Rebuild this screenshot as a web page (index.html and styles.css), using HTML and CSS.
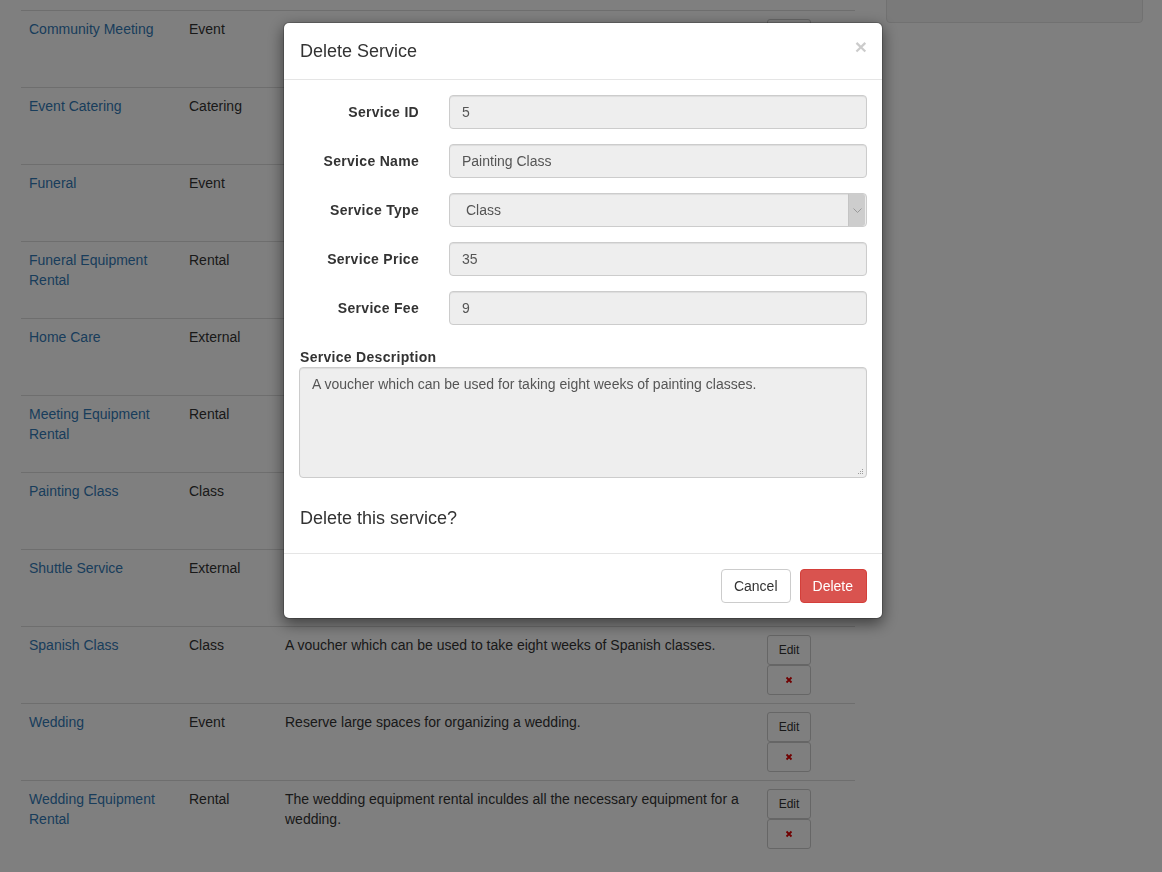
FILE: index.html
```html
<!DOCTYPE html>
<html lang="en">
<head>
<meta charset="utf-8">
<title>Services</title>
<link rel="stylesheet" href="styles.css">
</head>
<body>
<div class="page">
  <main class="main">
    <table class="services">
      <colgroup><col class="c-name"><col class="c-type"><col class="c-desc"><col class="c-act"></colgroup>
      <tbody>
        <tr class="row-partial">
          <td></td><td></td><td></td>
          <td><div class="acts acts-tail"><button class="btn btn-sm" aria-label="Delete"><svg class="x" viewBox="0 0 8 8"><path d="M1.5 1.5L6.5 6.5M6.5 1.5L1.5 6.5"/></svg></button></div></td>
        </tr>
        <tr>
          <td><a href="#">Community Meeting</a></td><td>Event</td>
          <td>Reserve a room for a community meeting.</td>
          <td><div class="acts"><button class="btn btn-sm">Edit</button><button class="btn btn-sm" aria-label="Delete"><svg class="x" viewBox="0 0 8 8"><path d="M1.5 1.5L6.5 6.5M6.5 1.5L1.5 6.5"/></svg></button></div></td>
        </tr>
        <tr>
          <td><a href="#">Event Catering</a></td><td>Catering</td>
          <td>Catering service for events.</td>
          <td><div class="acts"><button class="btn btn-sm">Edit</button><button class="btn btn-sm" aria-label="Delete"><svg class="x" viewBox="0 0 8 8"><path d="M1.5 1.5L6.5 6.5M6.5 1.5L1.5 6.5"/></svg></button></div></td>
        </tr>
        <tr>
          <td><a href="#">Funeral</a></td><td>Event</td>
          <td>Reserve a room for a funeral service.</td>
          <td><div class="acts"><button class="btn btn-sm">Edit</button><button class="btn btn-sm" aria-label="Delete"><svg class="x" viewBox="0 0 8 8"><path d="M1.5 1.5L6.5 6.5M6.5 1.5L1.5 6.5"/></svg></button></div></td>
        </tr>
        <tr>
          <td><a href="#">Funeral Equipment Rental</a></td><td>Rental</td>
          <td>Rental of the equipment needed for a funeral.</td>
          <td><div class="acts"><button class="btn btn-sm">Edit</button><button class="btn btn-sm" aria-label="Delete"><svg class="x" viewBox="0 0 8 8"><path d="M1.5 1.5L6.5 6.5M6.5 1.5L1.5 6.5"/></svg></button></div></td>
        </tr>
        <tr>
          <td><a href="#">Home Care</a></td><td>External</td>
          <td>Home care provided by an external partner.</td>
          <td><div class="acts"><button class="btn btn-sm">Edit</button><button class="btn btn-sm" aria-label="Delete"><svg class="x" viewBox="0 0 8 8"><path d="M1.5 1.5L6.5 6.5M6.5 1.5L1.5 6.5"/></svg></button></div></td>
        </tr>
        <tr>
          <td><a href="#">Meeting Equipment Rental</a></td><td>Rental</td>
          <td>Rental of projectors, screens and chairs for meetings.</td>
          <td><div class="acts"><button class="btn btn-sm">Edit</button><button class="btn btn-sm" aria-label="Delete"><svg class="x" viewBox="0 0 8 8"><path d="M1.5 1.5L6.5 6.5M6.5 1.5L1.5 6.5"/></svg></button></div></td>
        </tr>
        <tr>
          <td><a href="#">Painting Class</a></td><td>Class</td>
          <td>A voucher which can be used for taking eight weeks of painting classes.</td>
          <td><div class="acts"><button class="btn btn-sm">Edit</button><button class="btn btn-sm" aria-label="Delete"><svg class="x" viewBox="0 0 8 8"><path d="M1.5 1.5L6.5 6.5M6.5 1.5L1.5 6.5"/></svg></button></div></td>
        </tr>
        <tr>
          <td><a href="#">Shuttle Service</a></td><td>External</td>
          <td>A shuttle service provided by an external partner.</td>
          <td><div class="acts"><button class="btn btn-sm">Edit</button><button class="btn btn-sm" aria-label="Delete"><svg class="x" viewBox="0 0 8 8"><path d="M1.5 1.5L6.5 6.5M6.5 1.5L1.5 6.5"/></svg></button></div></td>
        </tr>
        <tr>
          <td><a href="#">Spanish Class</a></td><td>Class</td>
          <td>A voucher which can be used to take eight weeks of Spanish classes.</td>
          <td><div class="acts"><button class="btn btn-sm">Edit</button><button class="btn btn-sm" aria-label="Delete"><svg class="x" viewBox="0 0 8 8"><path d="M1.5 1.5L6.5 6.5M6.5 1.5L1.5 6.5"/></svg></button></div></td>
        </tr>
        <tr>
          <td><a href="#">Wedding</a></td><td>Event</td>
          <td>Reserve large spaces for organizing a wedding.</td>
          <td><div class="acts"><button class="btn btn-sm">Edit</button><button class="btn btn-sm" aria-label="Delete"><svg class="x" viewBox="0 0 8 8"><path d="M1.5 1.5L6.5 6.5M6.5 1.5L1.5 6.5"/></svg></button></div></td>
        </tr>
        <tr>
          <td><a href="#">Wedding Equipment Rental</a></td><td>Rental</td>
          <td>The wedding equipment rental inculdes all the necessary equipment for a wedding.</td>
          <td><div class="acts"><button class="btn btn-sm">Edit</button><button class="btn btn-sm" aria-label="Delete"><svg class="x" viewBox="0 0 8 8"><path d="M1.5 1.5L6.5 6.5M6.5 1.5L1.5 6.5"/></svg></button></div></td>
        </tr>
      </tbody>
    </table>
  </main>
  <aside class="sidebar"><div class="well"></div></aside>
</div>

<div class="backdrop">
  <div class="modal" role="dialog" aria-labelledby="mtitle">
    <div class="modal-header">
      <h4 class="modal-title" id="mtitle">Delete Service</h4>
      <button class="close" aria-label="Close">×</button>
    </div>
    <div class="modal-body">
      <form class="form-h">
        <div class="form-row"><label class="lbl">Service ID</label><input class="ctl" readonly value="5"></div>
        <div class="form-row"><label class="lbl">Service Name</label><input class="ctl" readonly value="Painting Class"></div>
        <div class="form-row"><label class="lbl">Service Type</label>
          <div class="select"><span class="select-val">Class</span><span class="select-arrow"><svg viewBox="0 0 9 5"><path d="M0.5 0.5L4.5 4.5L8.5 0.5"/></svg></span></div>
        </div>
        <div class="form-row"><label class="lbl">Service Price</label><input class="ctl" readonly value="35"></div>
        <div class="form-row"><label class="lbl">Service Fee</label><input class="ctl" readonly value="9"></div>
        <div class="desc">
          <label class="desc-lbl">Service Description</label>
          <div class="ta-wrap">
            <textarea class="ctl ta" readonly>A voucher which can be used for taking eight weeks of painting classes.</textarea>
            <svg class="grip" viewBox="0 0 7 7"><rect x="5" y="1" width="1" height="1"/><rect x="3" y="3" width="1" height="1"/><rect x="5" y="3" width="1" height="1"/><rect x="1" y="5" width="1" height="1"/><rect x="3" y="5" width="1" height="1"/><rect x="5" y="5" width="1" height="1"/></svg>
          </div>
        </div>
      </form>
      <h4 class="confirm">Delete this service?</h4>
    </div>
    <div class="modal-footer">
      <button class="btn btn-default">Cancel</button>
      <button class="btn btn-danger">Delete</button>
    </div>
  </div>
</div>
</body>
</html>
```

FILE: styles.css
```css
* { box-sizing: border-box; }
html, body { margin: 0; height: 100%; }
body {
  font-family: "Liberation Sans", Arial, Helvetica, sans-serif;
  font-size: 14px;
  line-height: 20px;
  color: #333;
  background: #fff;
  overflow: hidden;
}

/* page under the modal (scrolled) */
.page {
  display: flex;
  align-items: flex-start;
  gap: 31px;
  padding: 0 19px 0 21px;
  margin-top: -67px;
}
.main { width: 834px; flex: none; }
.sidebar { width: 257px; flex: none; }
.well {
  height: 90px;
  background: #f5f5f5;
  border: 1px solid #e3e3e3;
  border-radius: 4px;
  box-shadow: inset 0 1px 1px rgba(0,0,0,.05);
}

.services { width: 100%; border-collapse: collapse; table-layout: fixed; }
.c-name { width: 160px; }
.c-type { width: 96px; }
.c-desc { width: 482px; }
.c-act { width: 96px; }
.services td {
  border-top: 1px solid #ddd;
  padding: 8px;
  vertical-align: top;
  height: 77px;
}
.services .row-partial td { border-top: 0; }
.services a { color: #337ab7; text-decoration: none; }

.acts { display: flex; flex-direction: column; align-items: flex-start; }
.acts-tail { padding-top: 29px; }

.btn {
  font-family: inherit;
  background: #fff;
  color: #333;
  border: 1px solid #ccc;
  border-radius: 4px;
  cursor: pointer;
  margin: 0;
}
.btn-sm {
  width: 44px;
  height: 30px;
  padding: 0;
  font-size: 12px;
  line-height: 18px;
  border-radius: 3px;
  display: flex;
  align-items: center;
  justify-content: center;
}
.x { width: 8px; height: 8px; }
.x path { stroke: #e00000; stroke-width: 1.8; fill: none; }

/* modal */
.backdrop {
  position: fixed;
  inset: 0;
  background: rgba(0,0,0,.5);
}
.modal {
  width: 600px;
  margin: 22px 0 0 283px;
  background: #fff;
  border: 1px solid rgba(0,0,0,.2);
  border-radius: 6px;
  box-shadow: 0 5px 15px rgba(0,0,0,.5);
  background-clip: padding-box;
}
.modal-header {
  display: flex;
  justify-content: space-between;
  align-items: flex-start;
  padding: 15px 15px 15px 16px;
  border-bottom: 1px solid #e5e5e5;
}
.modal-title {
  margin: 0;
  font-size: 18px;
  font-weight: 500;
  line-height: 26px;
  color: #333;
}
.close {
  background: none;
  border: 0;
  padding: 0;
  margin-top: -2px;
  font-family: inherit;
  font-size: 21px;
  font-weight: bold;
  line-height: 1;
  color: #000;
  opacity: .2;
  cursor: pointer;
}
.modal-body { padding: 15px; }

.form-row {
  display: grid;
  grid-template-columns: 120px 1fr;
  column-gap: 30px;
  margin-bottom: 15px;
}
.lbl {
  font-weight: bold;
  text-align: right;
  padding-top: 7px;
  line-height: 20px;
  letter-spacing: 0.3px;
}
.ctl {
  display: block;
  width: 100%;
  height: 34px;
  padding: 6px 12px;
  font-family: inherit;
  font-size: 14px;
  line-height: 20px;
  color: #555;
  background: #eee;
  border: 1px solid #ccc;
  border-radius: 4px;
  box-shadow: inset 0 1px 1px rgba(0,0,0,.075);
  outline: none;
}
.select {
  display: flex;
  align-items: stretch;
  height: 34px;
  background: #eee;
  border: 1px solid #ccc;
  border-radius: 4px;
  box-shadow: inset 0 1px 1px rgba(0,0,0,.075);
  color: #555;
}
.select-val { flex: 1; padding: 6px 16px; }
.select-arrow {
  width: 17px;
  margin-right: 1px;
  background: #cdcdcd;
  border-left: 1px solid #c4c4c4;
  border-radius: 0 3px 3px 0;
  display: flex;
  align-items: center;
  justify-content: center;
}
.select-arrow svg { width: 9px; height: 5px; }
.select-arrow path { fill: none; stroke: #999; stroke-width: 1; }

.desc { padding-top: 7px; }
.desc-lbl { display: block; padding-left: 1px; font-weight: bold; line-height: 20px; letter-spacing: 0.3px; }
.ta-wrap { position: relative; }
.ta { height: 111px; resize: none; }
.grip { position: absolute; right: 3px; bottom: 3px; width: 7px; height: 7px; fill: #9a9a9a; }

.confirm {
  margin: 29px 0 9px;
  padding-left: 1px;
  font-size: 18px;
  font-weight: 500;
  line-height: 22px;
  color: #333;
}

.modal-footer {
  display: flex;
  justify-content: flex-end;
  gap: 9px;
  padding: 15px;
  border-top: 1px solid #e5e5e5;
}
.modal-footer .btn {
  height: 34px;
  padding: 6px 12px;
  font-size: 14px;
  line-height: 20px;
}
.modal-footer .btn-danger {
  padding: 6px 13px 6px 12px;
  background: #d9534f;
  border-color: #d43f3a;
  color: #fff;
}
```
